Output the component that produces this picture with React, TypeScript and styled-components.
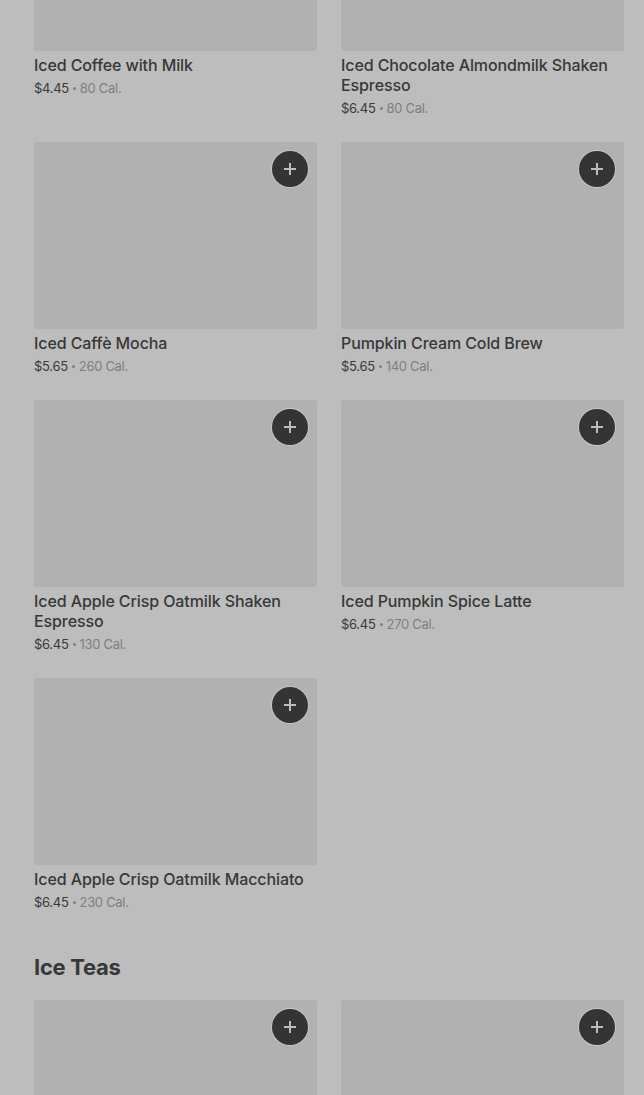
import React from "react";
import styled, { createGlobalStyle } from "styled-components";

const Global = createGlobalStyle`
  html, body { margin: 0; padding: 0; background: #bdbdbd; }
  body { font-family: Inter, "Noto Sans", Arial, sans-serif; overflow: hidden; }
`;

const Page = styled.div`
  width: 644px;
  height: 1095px;
  overflow: hidden;
  background: #bdbdbd;
  box-sizing: border-box;
  padding: 0 20px 0 34px;
`;

const Grid = styled.div<{ $offset?: number }>`
  display: grid;
  grid-template-columns: 283px 283px;
  column-gap: 24px;
  row-gap: 24px;
  margin-top: ${(p) => p.$offset ?? 0}px;
`;

const Card = styled.div`
  display: flex;
  flex-direction: column;
`;

const ImageBox = styled.div`
  position: relative;
  height: 187px;
  background: #b1b1b1;
  border-radius: 2px;
`;

const AddButton = styled.div`
  position: absolute;
  top: 9px;
  right: 9px;
  width: 36px;
  height: 36px;
  border-radius: 50%;
  background: #343434;
  box-shadow: 0 0 0 1px #c4c4c4;
  display: flex;
  align-items: center;
  justify-content: center;
`;

const Title = styled.div`
  margin-top: 4px;
  font-size: 16px;
  line-height: 20px;
  font-weight: 500;
  color: #383838;
  letter-spacing: -0.1px;
`;

const Meta = styled.div`
  margin-top: 3px;
  height: 20px;
  display: flex;
  align-items: center;
  font-size: 13px;
  line-height: 20px;
  color: #3a3a3a;
  letter-spacing: -0.3px;
`;

const Dot = styled.span`
  display: inline-block;
  width: 3px;
  height: 3px;
  border-radius: 50%;
  background: #7f7f7f;
  margin: 1px 4px 0 4px;
`;

const Cal = styled.span`
  color: #7f7f7f;
`;

const Heading = styled.h2`
  margin: 41px 0 19px;
  font-size: 22px;
  line-height: 28px;
  font-weight: 700;
  color: #383838;
  letter-spacing: -0.3px;
`;

const Plus = () => (
  <svg width="14" height="14" viewBox="0 0 14 14">
    <path d="M7 1v12M1 7h12" stroke="#bdbdbd" strokeWidth="2" />
  </svg>
);

type Item = { name: string; price?: string; cal?: string; add?: boolean };

const Product = ({ item }: { item: Item }) => (
  <Card>
    <ImageBox>
      {item.add !== false && (
        <AddButton>
          <Plus />
        </AddButton>
      )}
    </ImageBox>
    {item.name && <Title>{item.name}</Title>}
    {item.price && (
      <Meta>
        <span>{item.price}</span>
        <Dot />
        <Cal>{item.cal}</Cal>
      </Meta>
    )}
  </Card>
);

const coffees: Item[] = [
  { name: "Iced Coffee with Milk", price: "$4.45", cal: "80 Cal." },
  { name: "Iced Chocolate Almondmilk Shaken Espresso", price: "$6.45", cal: "80 Cal." },
  { name: "Iced Caffè Mocha", price: "$5.65", cal: "260 Cal." },
  { name: "Pumpkin Cream Cold Brew", price: "$5.65", cal: "140 Cal." },
  { name: "Iced Apple Crisp Oatmilk Shaken Espresso", price: "$6.45", cal: "130 Cal." },
  { name: "Iced Pumpkin Spice Latte", price: "$6.45", cal: "270 Cal." },
  { name: "Iced Apple Crisp Oatmilk Macchiato", price: "$6.45", cal: "230 Cal." },
];

const teas: Item[] = [{ name: "" }, { name: "" }];

export default function App() {
  return (
    <>
      <Global />
      <Page>
        <Grid $offset={-136}>
          {coffees.map((c, i) => (
            <Product key={i} item={{ ...c, add: i > 1 }} />
          ))}
        </Grid>
        <Heading>Ice Teas</Heading>
        <Grid>
          {teas.map((t, i) => (
            <Product key={i} item={t} />
          ))}
        </Grid>
      </Page>
    </>
  );
}
